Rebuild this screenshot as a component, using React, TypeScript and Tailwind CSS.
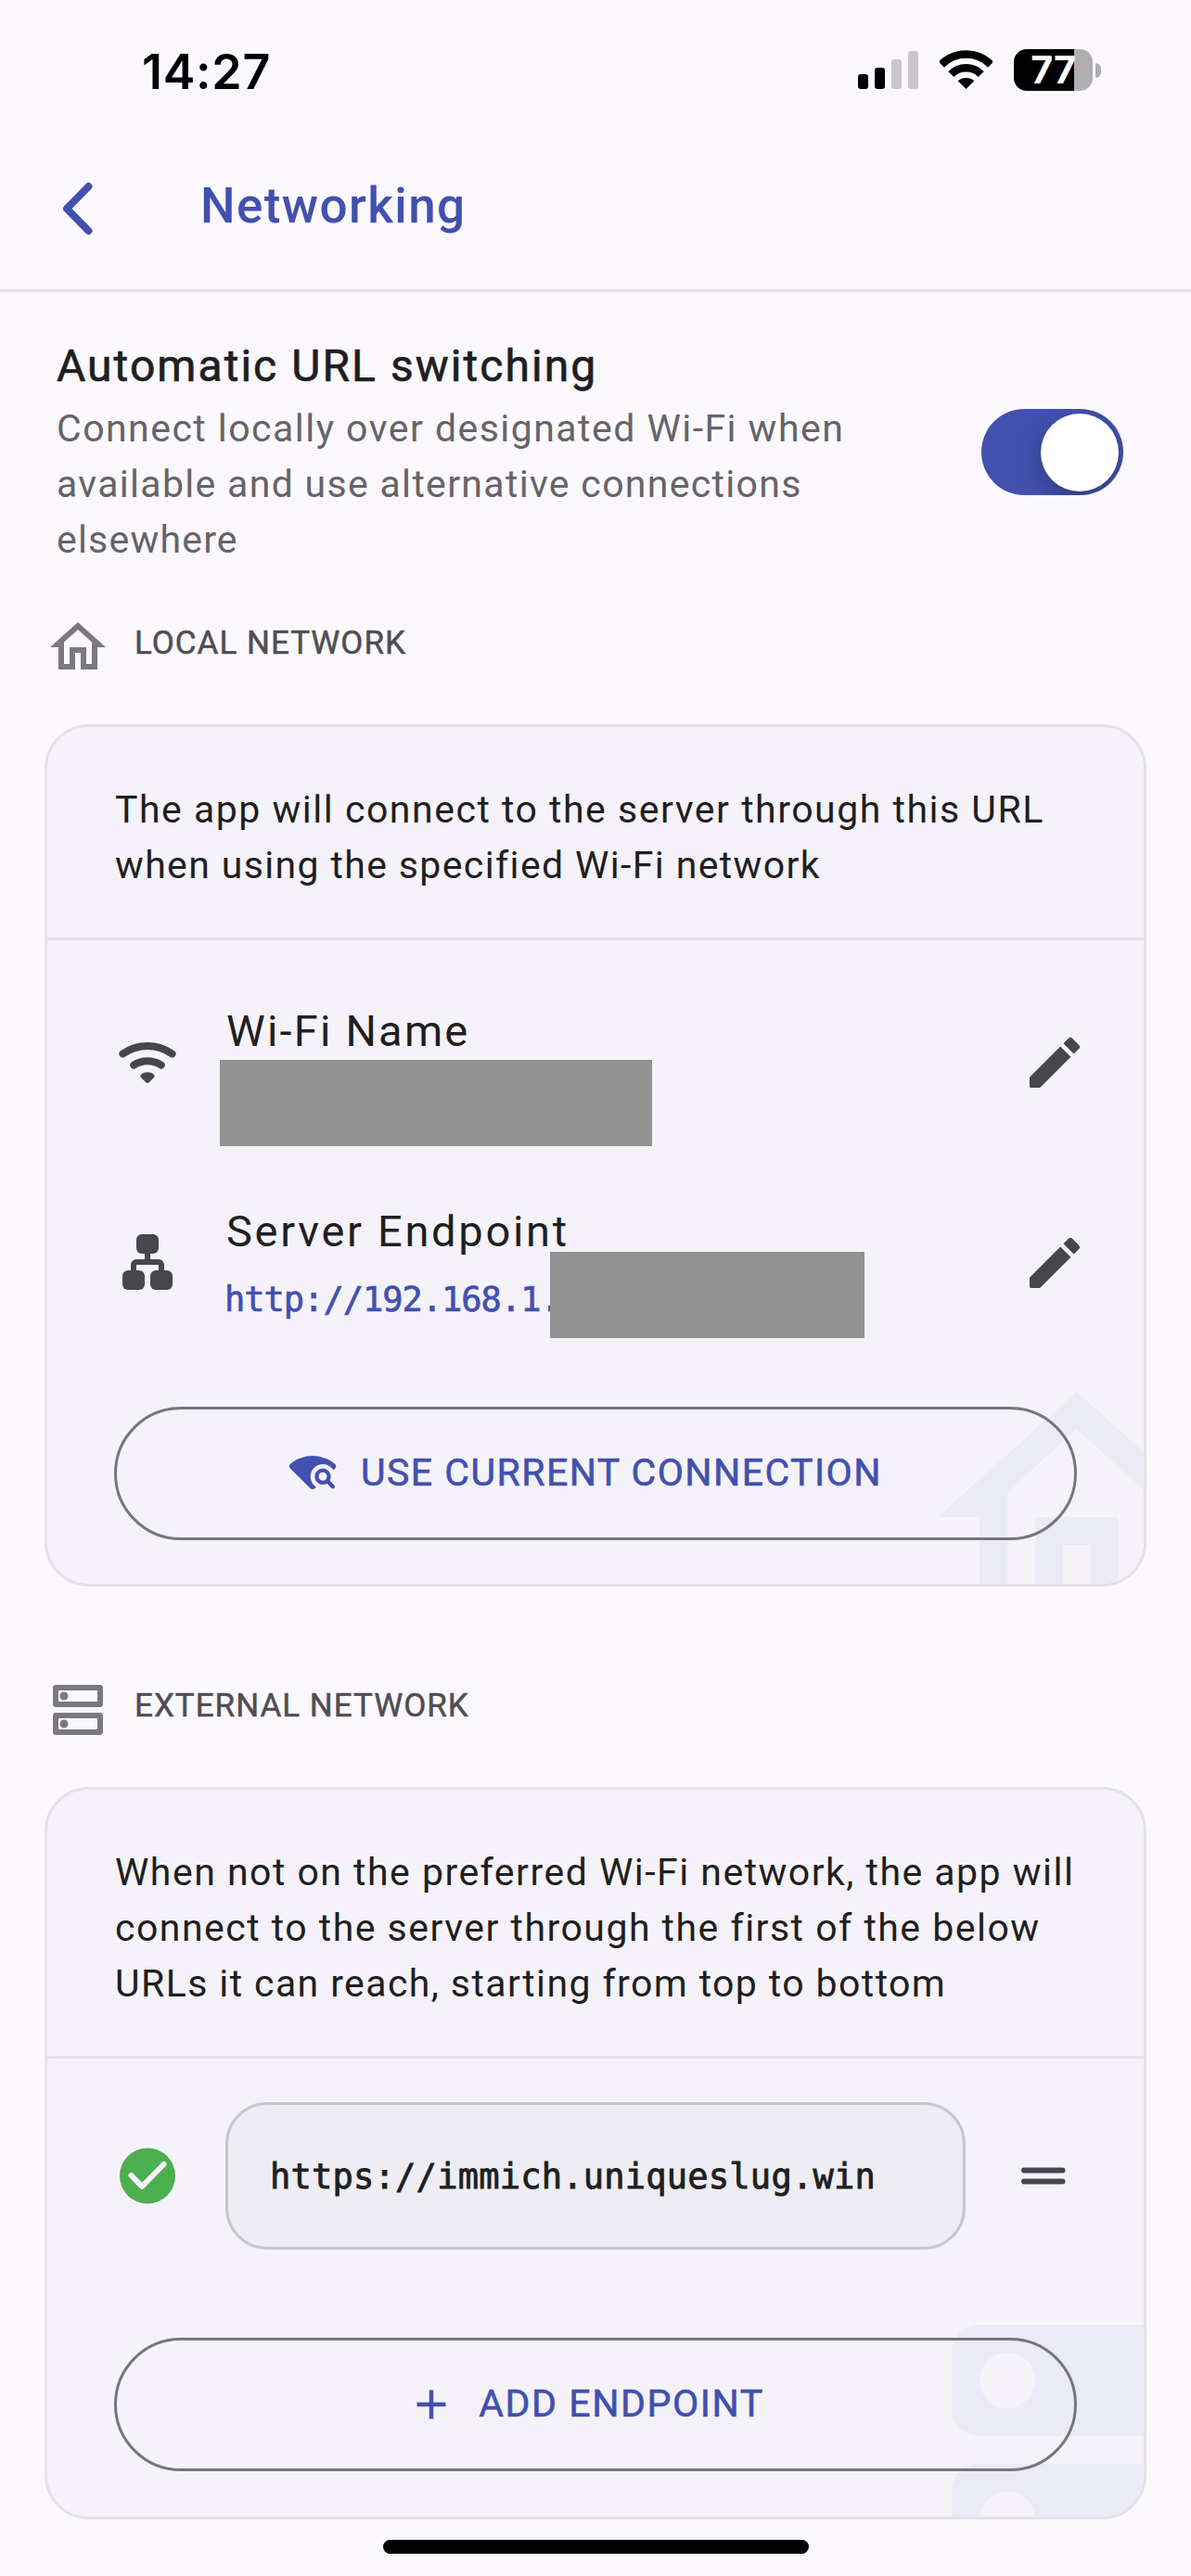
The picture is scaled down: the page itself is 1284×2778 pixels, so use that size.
import type { ReactNode } from "react";

const HOME_PATH =
  "M12 5.69l5 4.5V18h-2v-6H9v6H7v-7.81l5-4.5M12 3L2 12h3v8h6v-6h2v6h6v-8h3L12 3z";
const DNS_OUTLINE_PATH =
  "M19 15v4H5v-4h14m1-2H4c-.55 0-1 .45-1 1v6c0 .55.45 1 1 1h16c.55 0 1-.45 1-1v-6c0-.55-.45-1-1-1zM7 18.5c-.82 0-1.5-.67-1.5-1.5s.68-1.5 1.5-1.5 1.5.67 1.5 1.5-.67 1.5-1.5 1.5zM19 5v4H5V5h14m1-2H4c-.55 0-1 .45-1 1v6c0 .55.45 1 1 1h16c.55 0 1-.45 1-1V4c0-.55-.45-1-1-1zM7 8.5c-.82 0-1.5-.67-1.5-1.5S6.18 5.5 7 5.5s1.5.68 1.5 1.5S7.83 8.5 7 8.5z";
const DNS_FILLED_PATH =
  "M19 13H5c-1.1 0-2 .9-2 2v4c0 1.1.9 2 2 2h14c1.1 0 2-.9 2-2v-4c0-1.1-.9-2-2-2zM7 19c-1.1 0-2-.9-2-2s.9-2 2-2 2 .9 2 2-.9 2-2 2zM19 3H5c-1.1 0-2 .9-2 2v4c0 1.1.9 2 2 2h14c1.1 0 2-.9 2-2V5c0-1.1-.9-2-2-2zM7 9c-1.1 0-2-.9-2-2s.9-2 2-2 2 .9 2 2-.9 2-2 2z";
const EDIT_PATH =
  "M3 17.46v3.04c0 .28.22.5.5.5h3.04c.13 0 .26-.05.35-.15L17.81 9.94l-3.75-3.75L3.15 17.1c-.1.1-.15.22-.15.36zM20.71 7.04a.996.996 0 0 0 0-1.41l-2.34-2.34a.996.996 0 0 0-1.41 0l-1.83 1.83 3.75 3.75 1.83-1.83z";

function MaterialIcon({ path, className }: { path: string; className: string }) {
  return (
    <svg viewBox="0 0 24 24" fill="currentColor" className={className}>
      <path d={path} />
    </svg>
  );
}

function WifiIcon() {
  return (
    <svg viewBox="0 0 72 72" className="size-[72px] shrink-0 text-[#46464f]" fill="none">
      <g stroke="currentColor" strokeWidth="8" strokeLinecap="round">
        <path d="M9.4 26.4A46 46 0 0 1 62.6 26.4" />
        <path d="M21.2 38.6A27 27 0 0 1 50.8 38.6" />
      </g>
      <path
        d="M28.6 51.5c-.6-1-.3-2 .6-2.8 4-3.2 9.6-3.2 13.6 0 .9.8 1.2 1.8.6 2.8L37.8 57.2c-1 1-2.6 1-3.6 0z"
        fill="currentColor"
      />
    </svg>
  );
}

function LanIcon() {
  return (
    <svg viewBox="0 0 72 72" className="size-[72px] shrink-0 text-[#46464f]" fill="none">
      <rect x="24" y="5" width="24" height="21" rx="6" fill="currentColor" />
      <rect x="9" y="44" width="24" height="21" rx="6" fill="currentColor" />
      <rect x="39" y="44" width="24" height="21" rx="6" fill="currentColor" />
      <path
        d="M36 25v10M21 45v-7a3 3 0 0 1 3-3h24a3 3 0 0 1 3 3v7"
        stroke="currentColor"
        strokeWidth="6"
      />
    </svg>
  );
}

function WifiFindIcon() {
  return (
    <svg viewBox="0 0 54 54" className="size-[54px]" fill="none">
      <mask id="lens-cut">
        <rect width="54" height="54" fill="white" />
        <circle cx="37" cy="31.3" r="13.3" fill="black" />
      </mask>
      <path
        d="M2.2 17.6C16.5 6.2 35.5 6.2 49.8 17.6Q52.5 20 50.4 22.6L28.6 44Q26 46.2 23.4 44L1.9 22.6Q-.3 20 2.2 17.6Z"
        fill="currentColor"
        mask="url(#lens-cut)"
      />
      <circle cx="37" cy="31.3" r="6.6" stroke="currentColor" strokeWidth="4.2" />
      <path d="M42 36.3l5.8 5.8" stroke="currentColor" strokeWidth="4.4" strokeLinecap="round" />
    </svg>
  );
}

function StatusBar() {
  return (
    <div className="flex h-[150px] items-start justify-between pr-[97px] pl-[153px]">
      <span className="mt-12 font-[Inter,sans-serif] text-[52px] leading-[60px] font-semibold tracking-[0.7px] text-black">
        14:27
      </span>
      <div className="mt-[53px] flex items-start">
        <div className="flex h-[43px] items-end gap-[7px]">
          <div className="h-4 w-[11px] rounded-[3px] bg-black" />
          <div className="h-[23px] w-[11px] rounded-[3px] bg-black" />
          <div className="h-8 w-[11px] rounded-[3px] bg-[#c9c6cd]" />
          <div className="h-[41px] w-[11px] rounded-[3px] bg-[#c9c6cd]" />
        </div>
        <svg viewBox="0 0 57 42" className="mt-px ml-[23px] h-[42px] w-[57px]" fill="none">
          <g stroke="black" strokeWidth="8.6">
            <path d="M1.8 15.6A37.8 37.8 0 0 1 55.2 15.6" />
            <path d="M12.3 26A22.9 22.9 0 0 1 44.7 26" />
          </g>
          <path d="M28.5 42L19.7 33.2A13.5 13.5 0 0 1 37.3 33.2Z" fill="black" />
        </svg>
        <div className="ml-[23px] flex h-[45px] items-center">
          <div className="flex h-[45px] w-[85px] items-center justify-center rounded-[14px] bg-linear-to-r from-black from-[76.5%] to-[#b0aeb3] to-[76.5%]">
            <span className="font-[Inter,sans-serif] text-[41px] leading-[45px] font-bold text-white">
              77
            </span>
          </div>
          <div className="ml-[3px] h-4 w-1.5 rounded-r-full bg-[#b0aeb3]" />
        </div>
      </div>
    </div>
  );
}

function Header() {
  return (
    <header className="flex h-[165px] items-start border-b-[3px] border-[#e4e1e9] pl-[60px] text-[#4250af]">
      <svg viewBox="0 0 48 60" className="mt-[45px] h-[60px] w-12" fill="none">
        <path
          d="M35.5 6L12 30l23.5 24"
          stroke="currentColor"
          strokeWidth="8"
          strokeLinecap="round"
          strokeLinejoin="round"
        />
      </svg>
      <h1 className="mt-[42px] ml-[108px] text-[53px] leading-[60px] font-medium tracking-[1.4px]">
        Networking
      </h1>
    </header>
  );
}

function SectionLabel({ icon, children }: { icon: string; children: ReactNode }) {
  return (
    <div className="flex h-[72px] items-start pl-12">
      <MaterialIcon path={icon} className="size-[72px] text-[#7b797d]" />
      <h2 className="mt-3 ml-[25px] text-[35px] leading-10 tracking-[1px] text-[#4f4e50] [-webkit-text-stroke:0.5px_currentColor]">
        {children}
      </h2>
    </div>
  );
}

function Card({ watermark, children }: { watermark: string; children: ReactNode }) {
  return (
    <section className="relative mx-12 mt-[47px] overflow-hidden rounded-[48px] border-[3px] border-[#e4e1e9] bg-[#f5f2fa]">
      <MaterialIcon
        path={watermark}
        className="absolute -right-[108px] -bottom-[108px] size-[360px] text-[#ebeaf7]"
      />
      <div className="relative">{children}</div>
    </section>
  );
}

function PillButton({ children }: { children: ReactNode }) {
  return (
    <button className="flex h-[144px] w-full items-center justify-center rounded-full border-[3px] border-[#767680] pr-[22px] pb-0.5 text-[41px] leading-[60px] text-[#4250af] [-webkit-text-stroke:0.6px_currentColor]">
      {children}
    </button>
  );
}

export default function App() {
  return (
    <main className="flex h-[2778px] w-[1284px] flex-col overflow-hidden bg-[#fbf8ff] font-[Roboto,sans-serif] text-[#1f1f1f]">
      <StatusBar />
      <Header />

      <div className="flex justify-between pt-[49px] pr-[73px] pl-[61px]">
        <div>
          <h2 className="pt-px text-[48px] leading-[60px] tracking-[2.05px] [-webkit-text-stroke:0.7px_currentColor]">
            Automatic URL switching
          </h2>
          <p className="mt-[7px] text-[41px] leading-[60px] text-[#666467]">
            <span className="block tracking-[1.46px]">Connect locally over designated Wi-Fi when</span>
            <span className="block tracking-[1.31px]">available and use alternative connections</span>
            <span className="block tracking-[1.2px]">elsewhere</span>
          </p>
        </div>
        <div className="mt-[77px] flex h-[93px] w-[153px] items-center justify-end overflow-hidden rounded-full bg-[#4250af] pr-[5px]">
          <div className="size-[84px] rounded-full bg-white shadow-[0_9px_24px_rgba(0,0,0,0.25)]" />
        </div>
      </div>

      <div className="mt-[50px]">
        <SectionLabel icon={HOME_PATH}>LOCAL NETWORK</SectionLabel>
        <Card watermark={HOME_PATH}>
          <p className="border-b-[3px] border-[#e4e1e9] px-[72px] pt-[59px] pb-12 text-[41px] leading-[60px]">
            <span className="block pl-px tracking-[1.51px]">
              The app will connect to the server through this URL
            </span>
            <span className="block pl-px tracking-[1.36px]">when using the specified Wi-Fi network</span>
          </p>
          <div className="px-[72px] pt-6 pb-[47px]">
            <div className="flex h-[216px] items-center">
              <WifiIcon />
              <div className="ml-[42px] h-[128px] flex-1">
                <div className="pl-[7px] text-[47px] leading-[60px] tracking-[2.2px]">Wi-Fi Name</div>
                <div className="mt-px h-[93px] w-[466px] bg-[#929292]" />
              </div>
              <MaterialIcon path={EDIT_PATH} className="-mr-3 size-[72px] text-[#46464f]" />
            </div>
            <div className="flex h-[216px] items-center">
              <LanIcon />
              <div className="relative ml-12 h-[128px] flex-1">
                <div className="pl-px text-[47px] leading-[60px] tracking-[2.7px]">Server Endpoint</div>
                <div className="mt-[18px] -ml-px font-['DejaVu_Sans_Mono',monospace] text-[37px] leading-[52px] tracking-[-1px] whitespace-nowrap text-[#4250af] [-webkit-text-stroke:0.7px_currentColor]">
                  http://192.168.1.
                </div>
                <div className="absolute top-[52px] left-[350px] h-[93px] w-[339px] bg-[#929292]" />
              </div>
              <MaterialIcon path={EDIT_PATH} className="-mr-3 size-[72px] text-[#46464f]" />
            </div>
            <div className="mt-[47px]">
              <PillButton>
                <WifiFindIcon />
                <span className="ml-6 tracking-[1.46px]">USE CURRENT CONNECTION</span>
              </PillButton>
            </div>
          </div>
        </Card>
      </div>

      <div className="mt-[97px]">
        <SectionLabel icon={DNS_OUTLINE_PATH}>EXTERNAL NETWORK</SectionLabel>
        <Card watermark={DNS_FILLED_PATH}>
          <p className="border-b-[3px] border-[#e4e1e9] pt-[59px] pb-12 pl-[72px] text-[41px] leading-[60px] whitespace-nowrap">
            <span className="block pl-px tracking-[1.48px]">
              When not on the preferred Wi-Fi network, the app will
            </span>
            <span className="block pl-px tracking-[1.48px]">
              connect to the server through the first of the below
            </span>
            <span className="block pl-px tracking-[1.4px]">URLs it can reach, starting from top to bottom</span>
          </p>
          <div className="px-[72px] pt-[47px] pb-[49px]">
            <div className="flex items-center gap-12">
              <svg viewBox="0 0 72 72" className="size-[72px] shrink-0" fill="none">
                <circle cx="36" cy="35.5" r="30" fill="#4caf50" />
                <path
                  d="M18.5 35L30 47 53.5 23"
                  stroke="#f5f2fa"
                  strokeWidth="6"
                  strokeLinecap="round"
                  strokeLinejoin="round"
                />
              </svg>
              <div className="flex h-[159px] flex-1 items-center rounded-[45px] border-[3px] border-[#c6c5d0] bg-[#eeedf3] pt-[3px] pl-[45px] font-['DejaVu_Sans_Mono',monospace] text-[37px] tracking-[0.24px] [-webkit-text-stroke:0.9px_currentColor]">
                https://immich.uniqueslug.win
              </div>
              <svg viewBox="0 0 72 72" className="size-[72px] shrink-0 text-[#46464f]" fill="none">
                <path
                  d="M15 29.5h41.5M15 41.500h41.5"
                  stroke="currentColor"
                  strokeWidth="6"
                  strokeLinecap="round"
                />
              </svg>
            </div>
            <div className="mt-[95px]">
              <PillButton>
                <svg viewBox="0 0 54 54" className="size-[54px]" fill="none">
                  <path d="M27 12.5v31M11.5 28h31" stroke="currentColor" strokeWidth="4.5" />
                </svg>
                <span className="ml-6 tracking-[1.6px]">ADD ENDPOINT</span>
              </PillButton>
            </div>
          </div>
        </Card>
      </div>

      <div className="mt-[22px] flex justify-center">
        <div className="h-[15px] w-[459px] rounded-full bg-black" />
      </div>
    </main>
  );
}
